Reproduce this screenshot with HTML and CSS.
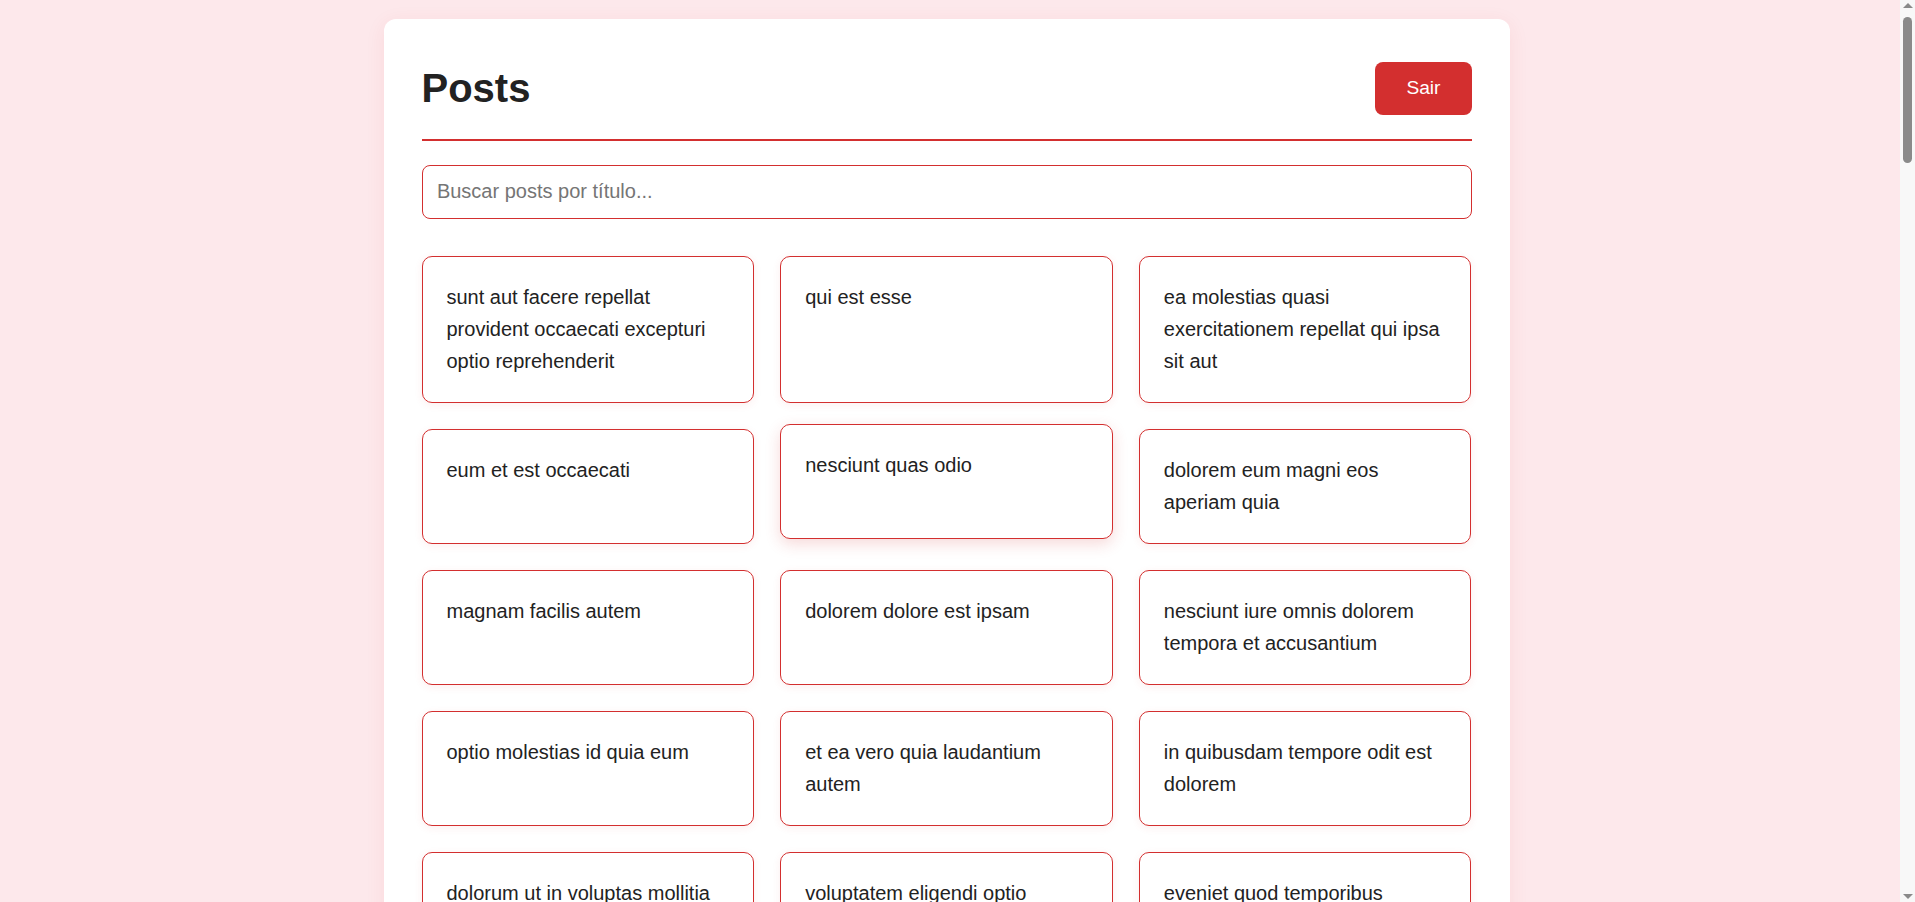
FILE: index.html
```html
<!DOCTYPE html>
<html lang="pt-BR">
<head>
<meta charset="utf-8">
<title>Posts</title>
<link rel="stylesheet" href="styles.css">
</head>
<body>
<main class="container">
  <header class="header">
    <h1 class="title">Posts</h1>
    <button class="logout" type="button">Sair</button>
  </header>
  <input class="search" type="text" placeholder="Buscar posts por título...">
  <section class="grid">
    <article class="card">sunt aut facere repellat provident occaecati excepturi optio reprehenderit</article>
    <article class="card">qui est esse</article>
    <article class="card">ea molestias quasi exercitationem repellat qui ipsa sit aut</article>
    <article class="card">eum et est occaecati</article>
    <article class="card is-hover">nesciunt quas odio</article>
    <article class="card">dolorem eum magni eos aperiam quia</article>
    <article class="card">magnam facilis autem</article>
    <article class="card">dolorem dolore est ipsam</article>
    <article class="card">nesciunt iure omnis dolorem tempora et accusantium</article>
    <article class="card">optio molestias id quia eum</article>
    <article class="card">et ea vero quia laudantium autem</article>
    <article class="card">in quibusdam tempore odit est dolorem</article>
    <article class="card">dolorum ut in voluptas mollitia et saepe quo animi</article>
    <article class="card">voluptatem eligendi optio</article>
    <article class="card">eveniet quod temporibus</article>
    <article class="card">sint suscipit perspiciatis velit dolorum rerum ipsa laboriosam odio</article>
    <article class="card">fugit voluptas sed molestias voluptatem provident</article>
    <article class="card">voluptate et itaque vero tempora molestiae</article>
    <article class="card">adipisci placeat illum aut reiciendis qui</article>
    <article class="card">doloribus ad provident suscipit at</article>
    <article class="card">asperiores ea ipsam voluptatibus modi minima quia sint</article>
    <article class="card">dolor sint quo a velit explicabo quia nam</article>
    <article class="card">maxime id vitae nihil numquam</article>
    <article class="card">autem hic labore sunt dolores incidunt</article>
  </section>
</main>
<div class="scrollbar" aria-hidden="true">
  <span class="scroll-arrow scroll-up"></span>
  <span class="scroll-thumb"></span>
  <span class="scroll-arrow scroll-down"></span>
</div>
</body>
</html>
```

FILE: styles.css
```css
* {
  box-sizing: border-box;
}

html, body {
  margin: 0;
}

body {
  background: #fde8eb;
  font-family: "Liberation Sans", Arial, sans-serif;
  color: #222222;
  padding: 19px 22px 40px 0;
}

.container {
  width: 1126px;
  margin: 0 auto;
  background: #ffffff;
  border-radius: 12px;
  padding: 38px 38px 40px 38px;
  box-shadow: 0 4px 20px rgba(211, 47, 47, 0.08);
}

.header {
  display: flex;
  justify-content: space-between;
  align-items: center;
  padding-bottom: 20px;
  border-bottom: 2px solid #d32f2f;
  margin-bottom: 24px;
}

.title {
  margin: 8px 0;
  font-size: 40px;
  font-weight: 700;
  line-height: 46px;
  color: #222222;
}

.logout {
  background: #d32f2f;
  color: #ffffff;
  border: none;
  border-radius: 8px;
  padding: 15.5px 31px;
  font-family: "Liberation Sans", Arial, sans-serif;
  font-size: 19.2px;
  line-height: 22px;
  cursor: pointer;
}

.search {
  display: block;
  width: 100%;
  padding: 14.4px;
  font-family: "Liberation Sans", Arial, sans-serif;
  font-size: 20px;
  color: #222222;
  border: 1px solid #d32f2f;
  border-radius: 8px;
  outline: none;
  margin-bottom: 37.5px;
}

.search::placeholder {
  color: #757575;
}

.grid {
  display: grid;
  grid-template-columns: repeat(3, 1fr);
  gap: 26px;
}

.card {
  border: 1px solid #d32f2f;
  border-radius: 10px;
  padding: 24px 24px 25px 24px;
  font-size: 20px;
  line-height: 32px;
  color: #222222;
  background: #ffffff;
  box-shadow: 0 2px 8px rgba(211, 47, 47, 0.08);
  cursor: pointer;
}

.card.is-hover {
  transform: translateY(-5px);
  box-shadow: 0 5px 15px rgba(211, 47, 47, 0.18);
}

.scrollbar {
  position: fixed;
  top: 0;
  right: 0;
  width: 15px;
  height: 100vh;
  background: #f8f8f8;
  display: flex;
  flex-direction: column;
  align-items: center;
}

.scroll-arrow {
  width: 0;
  height: 0;
  border-left: 5px solid transparent;
  border-right: 5px solid transparent;
}

.scroll-up {
  margin-top: 3px;
  border-bottom: 5px solid #8a8a8a;
}

.scroll-down {
  margin-top: auto;
  margin-bottom: 3px;
  border-top: 5px solid #8a8a8a;
}

.scroll-thumb {
  margin-top: 9px;
  width: 9px;
  height: 146px;
  border-radius: 5px;
  background: #8a8a8a;
}
```
